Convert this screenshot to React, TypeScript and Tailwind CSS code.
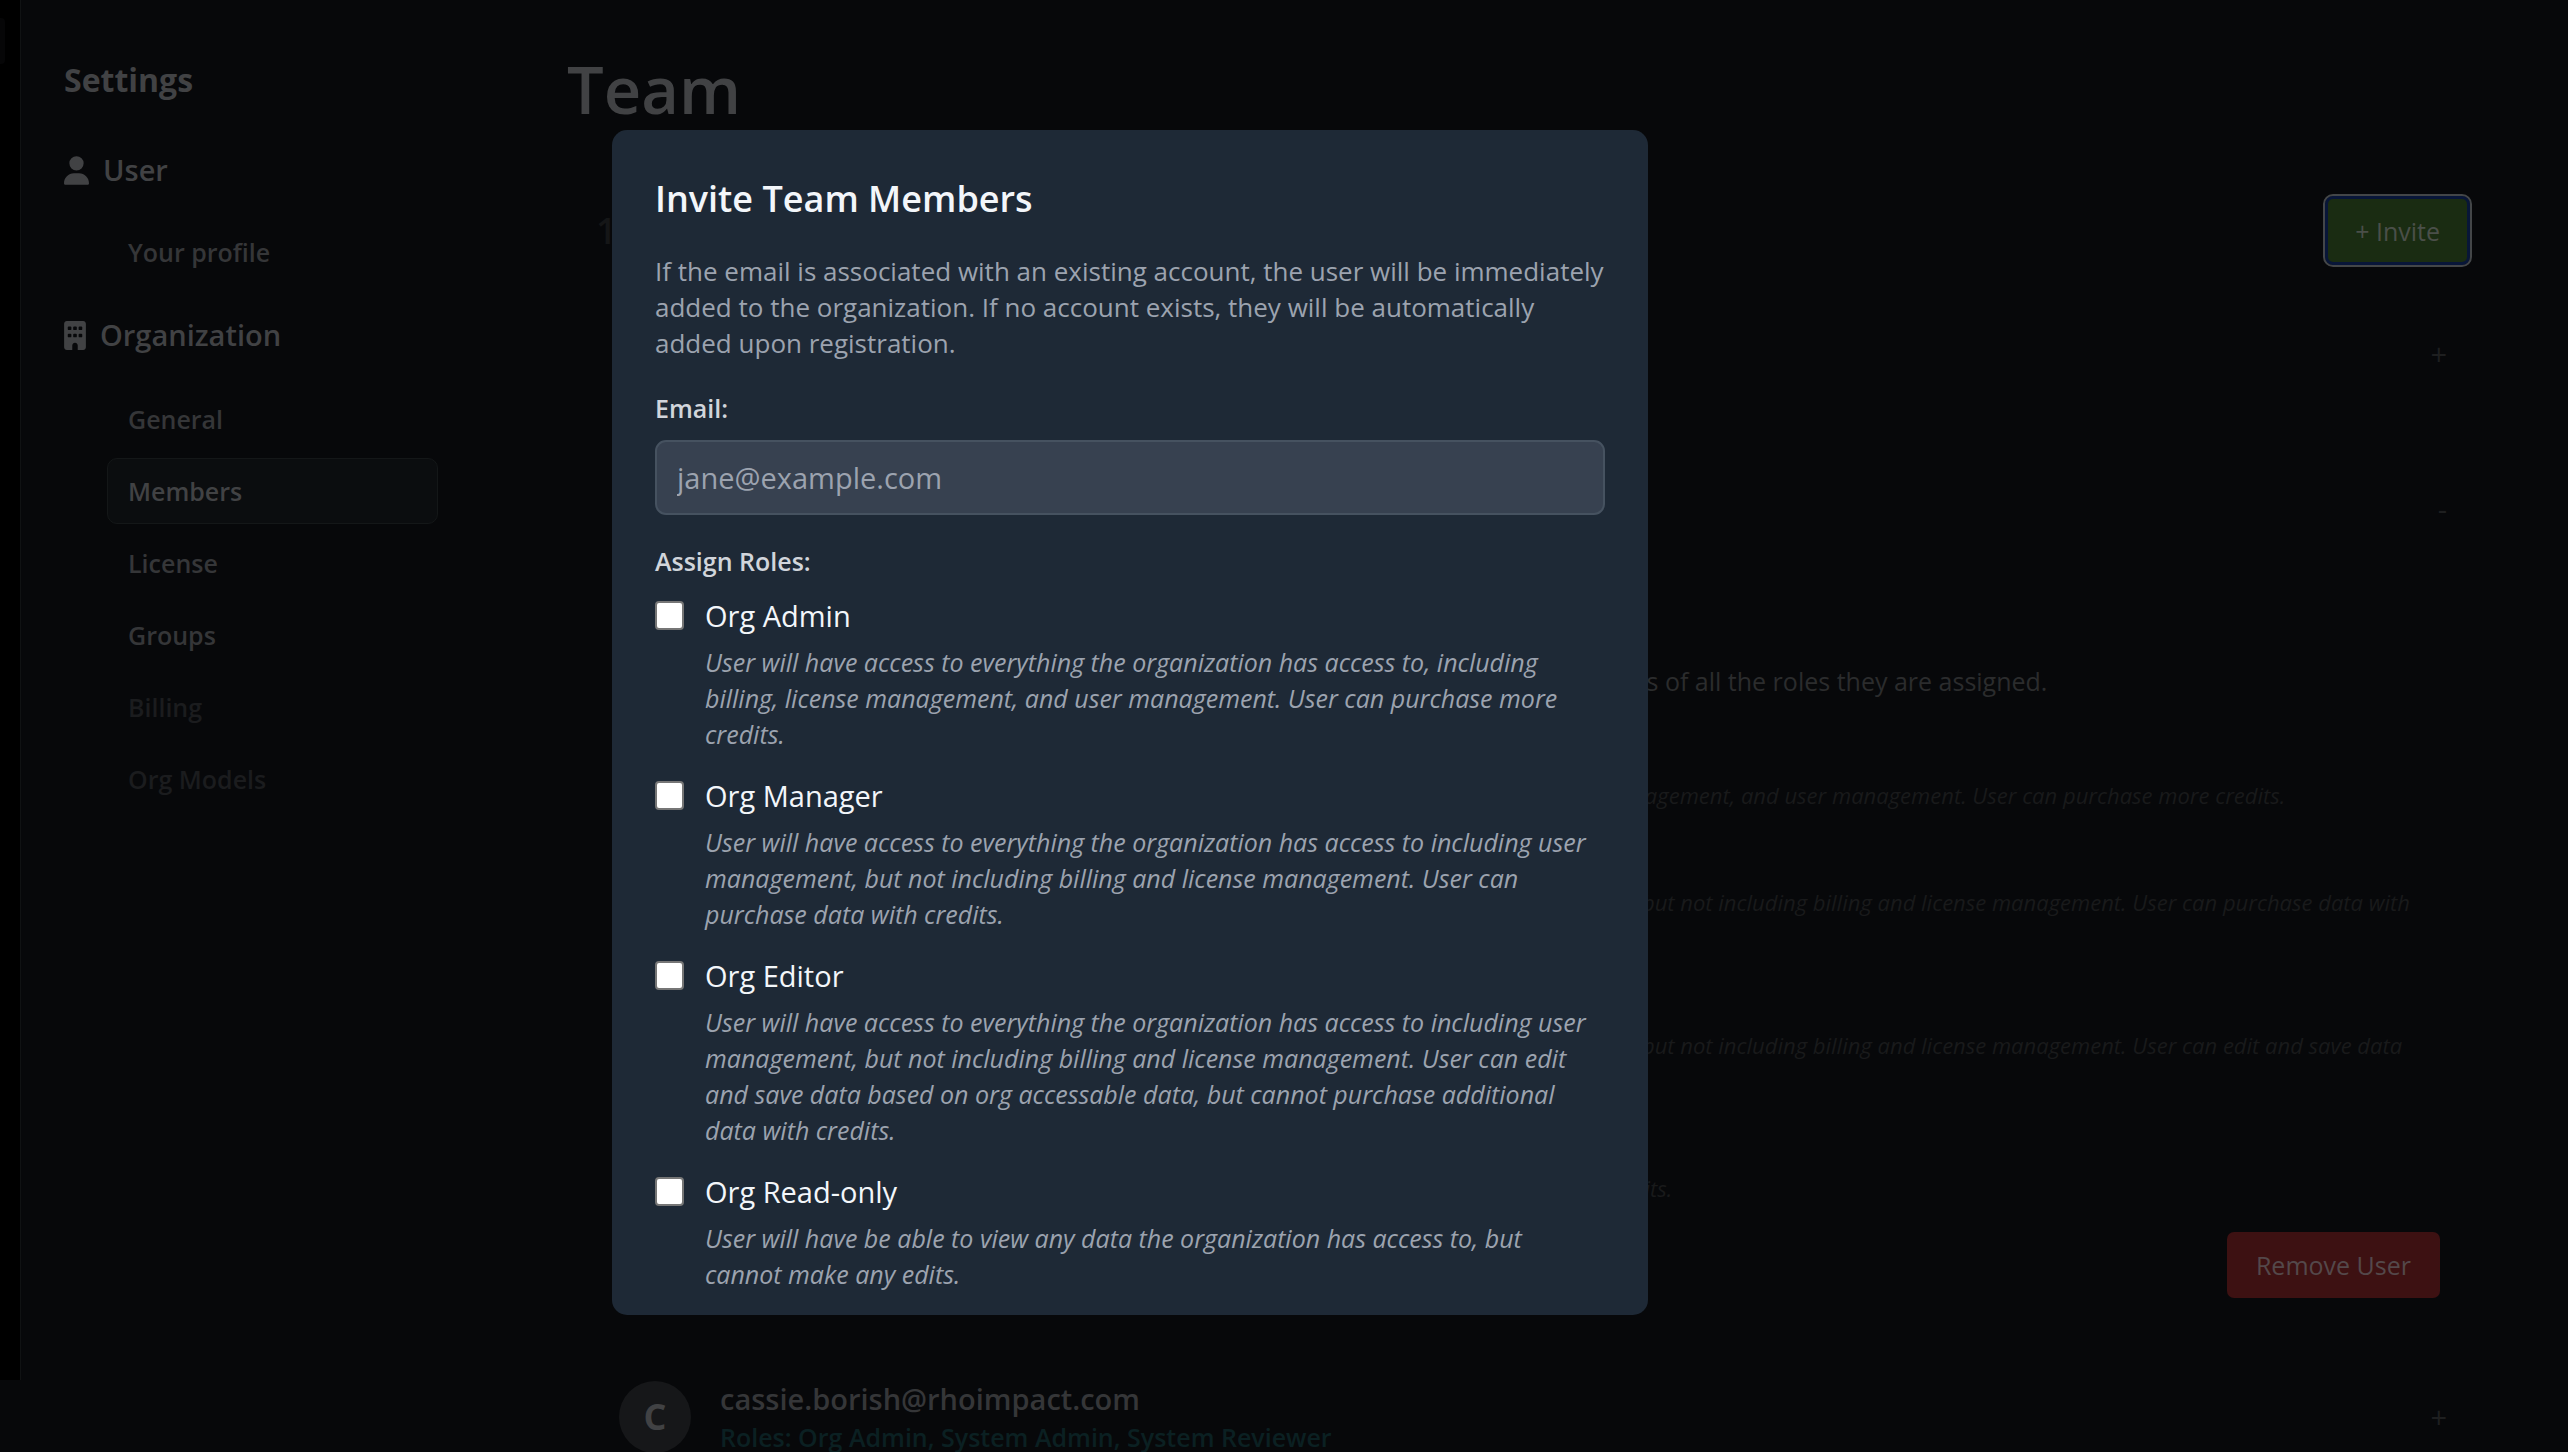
import { FaBuilding, FaUser } from 'react-icons/fa6';

type NavItem = { label: string; state?: 'active' | 'disabled' };

const userItems: NavItem[] = [{ label: 'Your profile' }];
const orgItems: NavItem[] = [
  { label: 'General' },
  { label: 'Members', state: 'active' },
  { label: 'License' },
  { label: 'Groups' },
  { label: 'Billing', state: 'disabled' },
  { label: 'Org Models', state: 'disabled' },
];

const inviteRoles = [
  {
    id: 'org-admin',
    name: 'Org Admin',
    text: 'User will have access to everything the organization has access to, including billing, license management, and user management. User can purchase more credits.',
  },
  {
    id: 'org-manager',
    name: 'Org Manager',
    text: 'User will have access to everything the organization has access to including user management, but not including billing and license management. User can purchase data with credits.',
  },
  {
    id: 'org-editor',
    name: 'Org Editor',
    text: 'User will have access to everything the organization has access to including user management, but not including billing and license management. User can edit and save data based on org accessable data, but cannot purchase additional data with credits.',
  },
  {
    id: 'org-read-only',
    name: 'Org Read-only',
    text: 'User will have be able to view any data the organization has access to, but cannot make any edits.',
  },
];

const memberRoles = [
  inviteRoles[0],
  inviteRoles[1],
  inviteRoles[2],
  {
    ...inviteRoles[3],
    text: 'User will be able to view data the organization has access to, but cannot make edits or use credits.',
  },
];

const navStyles = {
  active: 'border-[#141718] bg-[#0b0d0f] text-[#414244]',
  disabled: 'border-transparent text-[#1b1c1e]',
  normal: 'border-transparent text-[#353638]',
};

function NavList({ items }: { items: NavItem[] }) {
  return (
    <ul className="ml-[43px] flex flex-col gap-[6px]">
      {items.map((item) => (
        <li key={item.label}>
          <a
            href="#"
            className={`block rounded-[10px] border px-[20px] py-[14px] text-[25px] leading-[36px] font-semibold ${navStyles[item.state ?? 'normal']}`}
          >
            {item.label}
          </a>
        </li>
      ))}
    </ul>
  );
}

function Sidebar() {
  return (
    <nav className="w-[417px] shrink-0 pt-[58px] pl-[43px] text-[#414244]">
      <h2 className="text-[32px] leading-[44px] font-bold">Settings</h2>
      <div className="mt-[46px] flex items-center gap-[14px] text-[29px] leading-[44px] font-semibold">
        <FaUser className="h-[29px] w-[25px]" />
        <span>User</span>
      </div>
      <div className="mt-[27px]">
        <NavList items={userItems} />
      </div>
      <div className="mt-[28px] flex items-center gap-[14px] text-[29px] leading-[44px] font-semibold">
        <FaBuilding className="h-[29px] w-[22px]" />
        <span>Organization</span>
      </div>
      <div className="mt-[29px]">
        <NavList items={orgItems} />
      </div>
    </nav>
  );
}

function Toggle({ sign, label }: { sign: string; label: string }) {
  return (
    <button type="button" aria-label={label} className="ml-auto text-[29px] leading-[36px] text-[#1e1f20]">
      {sign}
    </button>
  );
}

function Team() {
  return (
    <main className="min-w-0 flex-1 pt-[44px] pr-[101px] pl-[129px]">
      <h1 className="text-[65px] leading-[90px] font-semibold text-[#414244]">Team</h1>
      <div className="mt-[65px] flex h-[63px] items-center justify-between pl-[29px]">
        <h2 className="text-[36px] leading-[44px] font-semibold text-[#151617]">12 members</h2>
        <button
          type="button"
          className="h-[63px] rounded-[5px] bg-[#1a2c12] px-[27px] text-[25px] leading-[36px] text-[#4a4f49] ring-[3px] ring-[#081638] outline-2 outline-offset-3 outline-[#434648]"
        >
          + Invite
        </button>
      </div>
      <div className="mt-[56px] flex flex-col gap-[83px] pr-[20px] pl-[52px]">
        <div className="flex h-[72px] items-center">
          <Toggle sign="+" label="Expand member" />
        </div>
        <section>
          <div className="flex h-[72px] items-center">
            <Toggle sign="-" label="Collapse member" />
          </div>
          <div className="mt-[118px] pr-[7px]">
            <p className="pl-[90px] text-[25px] leading-[36px] text-[#2b2c2d]">
              A user can be assigned one or more roles. Each user will be given the permissions of all the roles they are assigned.
            </p>
            <ul className="mt-[78px] flex flex-col gap-[71px] pl-[102px]">
              {memberRoles.map((role) => (
                <li key={role.id} className="text-[22px] leading-[36px] text-[#191a1b] italic">
                  {role.text}
                </li>
              ))}
            </ul>
            <div className="mt-[26px] flex justify-end">
              <button
                type="button"
                className="h-[66px] rounded-[7px] bg-[#3d1112] px-[29px] text-[25px] leading-[36px] text-[#54484a]"
              >
                Remove User
              </button>
            </div>
          </div>
        </section>
        <div className="flex h-[72px] items-center gap-[29px]">
          <div className="flex size-[72px] shrink-0 items-center justify-center rounded-full bg-[#161719] text-[36px] font-bold text-[#414244]">
            C
          </div>
          <div className="text-[#353638]">
            <p className="text-[29px] leading-[40px] font-semibold">cassie.borish@rhoimpact.com</p>
            <p className="text-[25px] leading-[36px] font-semibold text-[#0b2022]">
              Roles: Org Admin, System Admin, System Reviewer
            </p>
          </div>
          <Toggle sign="+" label="Expand cassie.borish@rhoimpact.com" />
        </div>
      </div>
    </main>
  );
}

function InviteDialog() {
  return (
    <div className="absolute inset-0 flex items-center justify-center pr-[308px] pb-[8px]">
      <div
        role="dialog"
        aria-labelledby="invite-title"
        className="w-full max-w-[1036px] rounded-[15px] bg-[#1e2936] px-[43px] pt-[44px] pb-[23px]"
      >
        <h2 id="invite-title" className="text-[36px] leading-[50px] font-semibold text-[#f3f6fa]">
          Invite Team Members
        </h2>
        <p className="mt-[29px] text-[26px] leading-[36px] text-[#9ca3af]">
          If the email is associated with an existing account, the user will be immediately added to the organization.
          If no account exists, they will be automatically added upon registration.
        </p>
        <label htmlFor="email" className="mt-[29px] block text-[25px] leading-[36px] font-semibold text-[#d1d5db]">
          Email:
        </label>
        <input
          id="email"
          type="email"
          placeholder="jane@example.com"
          className="mt-[14px] block h-[75px] w-full rounded-[11px] border-2 border-[#465260] bg-[#374150] px-[20px] text-[29px] text-white placeholder:text-[#9ca3af]"
        />
        <fieldset className="mt-[28px]">
          <legend className="text-[25px] leading-[36px] font-semibold text-[#d1d5db]">Assign Roles:</legend>
          <div className="mt-[15px] flex flex-col gap-[22px]">
            {inviteRoles.map((role) => (
              <div key={role.id} className="flex gap-[21px]">
                <input
                  id={role.id}
                  type="checkbox"
                  aria-describedby={`${role.id}-text`}
                  className="mt-[7px] size-[29px] shrink-0 appearance-none rounded-[4px] border-2 border-[#767676] bg-white"
                />
                <div className="pr-[6px]">
                  <label htmlFor={role.id} className="block text-[29px] leading-[43px] text-[#f3f6fa]">
                    {role.name}
                  </label>
                  <p id={`${role.id}-text`} className="mt-[7px] text-[25px] leading-[36px] text-[#9ca3af] italic">
                    {role.text}
                  </p>
                </div>
              </div>
            ))}
          </div>
        </fieldset>
      </div>
    </div>
  );
}

export default function App() {
  return (
    <div className='relative flex h-screen overflow-hidden bg-[#07080a] font-["Open_Sans",sans-serif]'>
      <div className="mb-[72px] w-[21px] shrink-0 border-r border-[#101213] bg-black pt-[18px]">
        <div className="h-[46px] w-[5px] rounded-r-[4px] bg-[#060607]" />
      </div>
      <Sidebar />
      <Team />
      <InviteDialog />
    </div>
  );
}
